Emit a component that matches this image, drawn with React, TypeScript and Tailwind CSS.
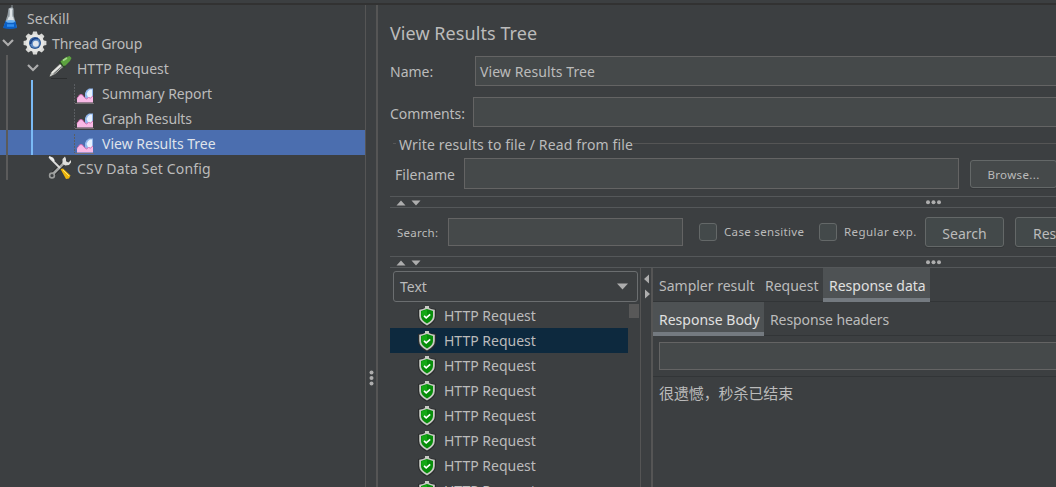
import type { ReactNode } from 'react';

const Flask = () => (
  <svg width="18" height="25" viewBox="0 0 18 25">
    <path d="M7.500 3.500 11 2l1.500 1.500V10L16 22.500H2.500L6.500 10z" fill="#9aa3a9" />
    <path d="M8.500 3.500h3V10l2 7H5.500l3-7z" fill="#dde3e7" />
    <path d="M8 5v7M12 5v7" stroke="#7d8a93" strokeWidth=".7" />
    <path d="M11 0v3" stroke="#8e979c" strokeWidth="1" />
    <path d="M4.500 16h10l1.500 7q-7 2-14 0z" fill="#0b5fc4" />
    <ellipse cx="9.500" cy="16.400" rx="4.500" ry="1.300" fill="#6db2f0" />
    <path d="M6 20.500h7" stroke="#2f8df0" strokeWidth="2.500" />
  </svg>
);

const Gear = () => (
  <svg width="24" height="24" viewBox="-12 -12 24 24">
    {[0, 45, 90, 135].map((a) => (
      <path key={a} d="M-2.800-8-1.900-11.400h3.800L2.800-8V8L1.900 11.400h-3.800L-2.800 8z" fill="#d8d8d6" transform={`rotate(${a})`} />
    ))}
    <circle r="9" fill="#e6e6e4" />
    <circle r="6" fill="#2c5794" />
    <circle r="4.800" fill="#5f8bc4" />
    <circle cx=".8" cy=".8" r="3" fill="#dfe5ec" />
    <path d="M-4.400 1Q-4-5 3-4.400" stroke="#183f83" strokeWidth="1.600" fill="none" />
  </svg>
);

const Pipette = () => (
  <svg width="24" height="25" viewBox="0 0 24 25">
    <path d="M3 23.500h16" stroke="#2c2e2f" strokeWidth="1" />
    <path d="M1 21.500 3 17 12 8.500l3.500 3.500-8.500 7.500-5 2.500z" fill="#c6c7c3" stroke="#333636" strokeWidth=".8" />
    <path d="m4 18 9-8" stroke="#f0f0ec" strokeWidth="1.200" />
    <path d="m5.500 19 8.500-7.500" stroke="#555a5a" strokeWidth=".9" />
    <path d="m11.500 6.500 5.500 6" stroke="#2d4629" strokeWidth="2.200" />
    <path d="m12.500 6.500 5-4 4-1.500 2 2-1.500 3-4.500 4.500-2 .5z" fill="#5ca33f" />
    <path d="m15 5.500 4-2.500" stroke="#a7d98c" strokeWidth="1.600" />
  </svg>
);

const Chart = () => (
  <svg width="20" height="22" viewBox="0 0 20 22">
    <path d="M.5 1v19" stroke="#5b5e62" strokeWidth="1" strokeDasharray="2 1" />
    <path d="M1 20.500h19" stroke="#777174" strokeWidth="1" />
    <path d="M11 18v-8q1-3.500 4-4.500h4V18z" fill="#8fb6ec" />
    <path d="M12.500 11q1-3.500 3.500-4.500h2v8l-3 2z" fill="#e6f1ff" />
    <path d="M3 19.500V15.500q.5-1.500 1.500-2 .5-2 2.500-2t2.500 2q1 .3 1.500 1.500l1.500 1 2-1.500 2 .5 2.500-2v6.500z" fill="#f8b9e6" />
    <path d="M3 15.500q.5-1.500 1.500-2 .5-2 2.500-2t2.500 2q1 .3 1.500 1.500l1.500 1 2-1.500 2 .5 2.500-2" stroke="#cf66ad" strokeWidth=".9" fill="none" />
  </svg>
);

const Tools = () => (
  <svg width="24" height="25" viewBox="0 0 24 25">
    <path d="M4 20 18 6" stroke="#242626" strokeWidth="4.500" />
    <path d="M4 20 18 6" stroke="#a4a6a5" strokeWidth="2.600" />
    <path d="M17 1.500 14.500 4v4.500l2.500 2 4-.5 2-2.500V5l-2.500 2.500L18 6.500V4z" fill="#dfdfdc" />
    <circle cx="4" cy="20.500" r="2.400" fill="#3c3f41" stroke="#9a9c9b" strokeWidth="1.600" />
    <path d="m2 3 10 10" stroke="#dcdcda" strokeWidth="1.800" />
    <path d="m1 2 3.500 1.500L6 6" stroke="#eee" strokeWidth="2" fill="none" />
    <path d="m12.500 14 2.500-.5 7.500 7-1.500 3-3 .5z" fill="#eeb60d" />
    <path d="m15 15 6 6" stroke="#ffe274" strokeWidth="1" />
  </svg>
);

const Shield = () => (
  <svg width="20" height="22" viewBox="0 0 20 22" className="shrink-0">
    <path d="M10 .5 12.500 3 19 4v7q0 6.500-9 10.800Q1 17.500 1 11V4l6.500-1z" fill="#2a2c2d" />
    <path d="M8 1h4v2l2 1 3.800.8V11q0 5.500-7.800 9.500Q2.200 16.500 2.200 11V4.800L6 4l2-1z" fill="#c9cbc5" />
    <path d="M10 4 16 6v5q0 4-6 7.500Q4 15 4 11V6z" fill="#078d0a" />
    <path d="M10 4.500V11H4.500V6.500z" fill="#14a815" />
    <path d="m7 10.800 2.200 2 4-3.500" stroke="#fff" strokeWidth="1.700" fill="none" />
  </svg>
);

const Chevron = () => (
  <svg width="12" height="8" viewBox="0 0 12 8">
    <path d="m1 1 5 5 5-5" stroke="#adadad" strokeWidth="2.200" fill="none" />
  </svg>
);

const reports = [
  { name: 'Summary Report', tracking: 'tracking-[-0.1px]' },
  { name: 'Graph Results', tracking: 'tracking-[-0.15px]' },
  { name: 'View Results Tree', tracking: '' },
];

function SplitBar() {
  return (
    <div className="flex h-3 shrink-0 items-center border-y border-[#55585a]">
      <svg width="26" height="6" viewBox="0 0 26 6" className="ml-[6px] mt-px">
        <path d="M0.5 5.5h9L5 .5zM15.5.5h9L20 5.5z" fill="#adadad" />
      </svg>
      <svg width="18" height="6" viewBox="0 0 18 6" className="ml-[503px]">
        <circle cx="3" cy="3.300" r="2" fill="#adadad" />
        <circle cx="8.500" cy="3.300" r="2" fill="#adadad" />
        <circle cx="14" cy="3.300" r="2" fill="#adadad" />
      </svg>
    </div>
  );
}

function Field({ className, children }: { className: string; children?: ReactNode }) {
  return (
    <div className={`flex shrink-0 items-center border border-[#646464] bg-[#45494a] ${className}`}>{children}</div>
  );
}

function Tree() {
  return (
    <div className="relative w-[365px] shrink-0">
      <div className="flex h-[25px] items-center">
        <div className="ml-px w-[26px]"><Flask /></div>
        <span className="pt-[2px] tracking-[0.1px]">SecKill</span>
      </div>
      <div className="flex h-[25px] items-center">
        <div className="ml-[2px] mr-[9px]"><Chevron /></div>
        <Gear />
        <span className="ml-[5px] pt-[2px] tracking-[-0.1px]">Thread Group</span>
      </div>
      <div className="flex h-[25px] items-center">
        <div className="ml-[27px] mr-[9px]"><Chevron /></div>
        <Pipette />
        <span className="ml-[5px] pt-[2px]">HTTP Request</span>
      </div>
      {reports.map((r) => (
        <div
          key={r.name}
          className={`flex h-[25px] items-center pl-[74px] ${r.name === 'View Results Tree' ? 'bg-[#4b6eaf] text-[#dfe3ea]' : ''}`}
        >
          <div className="w-7 pt-[2px]"><Chart /></div>
          <span className={`pt-[2px] ${r.tracking}`}>{r.name}</span>
        </div>
      ))}
      <div className="flex h-[25px] items-center pl-12">
        <Tools />
        <span className="ml-[5px] pt-[2px] tracking-[0.18px]">CSV Data Set Config</span>
      </div>
      <div className="absolute left-[6px] top-[50px] h-[125px] w-[2px] bg-[#5b5b5b]" />
      <div className="absolute left-[31px] top-[75px] h-[75px] w-[2px] bg-[#7abaf5]" />
    </div>
  );
}

function Results() {
  return (
    <div className="w-[250px] shrink-0 pt-[3px]">
      <div className="ml-[3px] flex h-[31px] w-[245px] items-center justify-between rounded-[3px] border border-[#6b6e70] pl-[6px] pr-[8px]">
        <span>Text</span>
        <svg width="13" height="8" viewBox="0 0 13 8"><path d="M1 .5h11l-5.500 6z" fill="#adadad" /></svg>
      </div>
      <div className="flex justify-between pt-px">
        <div className="w-[238px]">
          {[0, 1, 2, 3, 4, 5, 6, 7].map((n) => (
            <div key={n} className={`flex h-[25px] items-center pl-[27px] ${n === 1 ? 'bg-[#0d293e]' : ''}`}>
              <Shield />
              <span className="ml-[7px] pt-px">HTTP Request</span>
            </div>
          ))}
        </div>
        <div className="mr-px mt-px h-[14px] w-[10px] bg-[#585858]" />
      </div>
    </div>
  );
}

function Response() {
  return (
    <div className="min-w-0 flex-1">
      <div className="flex h-[34px] border-b border-[#323537]">
        <span className="w-[106px] pl-[6px] pt-[8px]">Sampler result</span>
        <span className="w-[64px] pl-[6px] pt-[8px]">Request</span>
        <span className="h-[34px] w-[107px] border-b-4 border-[#747a80] bg-[#4e5254] pl-[6px] pt-[8px] text-[#e0e0e0]">Response data</span>
      </div>
      <div className="flex h-[34px] border-b border-[#323537]">
        <span className="h-[34px] w-[111px] border-b-4 border-[#747a80] bg-[#4e5254] pl-[6px] pt-[8px] text-[#e0e0e0]">Response Body</span>
        <span className="pl-[6px] pt-[8px] tracking-[-0.1px]">Response headers</span>
      </div>
      <div className="flex h-[41px] border-b border-[#323537] pl-[6px] pt-[6px]">
        <Field className="h-7 w-[420px]" />
      </div>
      <div className="pl-[6px] pt-[6px] font-['Noto_Sans_CJK_SC',sans-serif] text-[15px] leading-[20px] tracking-[-0.1px]">很遗憾，秒杀已结束</div>
    </div>
  );
}

export default function App() {
  return (
    <div className="flex h-[487px] w-[1056px] flex-col overflow-hidden whitespace-nowrap bg-[#3c3f41] font-['Noto_Sans',sans-serif] text-[14px] leading-[20px] text-[#bbbbbb]">
      <div className="h-[5px] shrink-0 border-b-2 border-[#323232]" />
      <div className="flex min-h-0 flex-1">
        <Tree />
        <div className="flex w-[13px] shrink-0 items-center justify-center border-l border-r-2 border-l-[#555] border-r-[#555]">
          <svg width="6" height="16" viewBox="0 0 6 16" className="mt-[263px]">
            <circle cx="3.500" cy="2.500" r="2" fill="#adadad" />
            <circle cx="3.500" cy="8" r="2" fill="#adadad" />
            <circle cx="3.500" cy="13.500" r="2" fill="#adadad" />
          </svg>
        </div>
        <div className="flex min-w-0 flex-1 flex-col pl-3">
          <div className="h-[51px] shrink-0 pt-[16px] text-[18px] leading-6 tracking-[0.06px]">View Results Tree</div>
          <div className="flex h-[30px] shrink-0 items-center">
            <span className="w-[85px] shrink-0 pt-px">Name:</span>
            <Field className="h-[30px] w-[600px] pl-1"><span className="pt-px tracking-[0.08px]">View Results Tree</span></Field>
          </div>
          <div className="mt-[11px] flex h-[30px] shrink-0 items-center">
            <span className="w-[83px] shrink-0 pt-1 tracking-[-0.08px]">Comments:</span>
            <Field className="h-[30px] w-[600px]" />
          </div>
          <div className="flex h-[31px] shrink-0 items-center pl-[3px] pt-px">
            <div className="h-px w-[3px] bg-[#555]" />
            <span className="ml-[3px] pt-[3px] tracking-[0.15px]">Write results to file / Read from file</span>
            <div className="h-px flex-1 bg-[#555]" />
          </div>
          <div className="flex h-[38px] shrink-0 items-start">
            <span className="w-[74px] shrink-0 pl-[5px] pt-[7px]">Filename</span>
            <Field className="h-[31px] w-[495px]" />
            <div className="ml-[11px] mt-[2px] flex h-[28px] w-[87px] shrink-0 items-center justify-center rounded-[3px] border border-[#646868] bg-[#45494a] pt-px text-[11.500px] tracking-[0.35px] shadow-[0_1px_0_#35383a]">Browse...</div>
          </div>
          <SplitBar />
          <div className="flex h-12 shrink-0 items-center text-[11.500px]">
            <span className="w-[58px] shrink-0 pl-[7px] pt-px tracking-[0.25px]">Search:</span>
            <Field className="h-[28px] w-[235px]" />
            <div className="-mt-px ml-4 size-[18px] shrink-0 rounded-[3px] border border-[#646868] bg-[#43494a]" />
            <span className="ml-[7px] w-[95px] shrink-0 tracking-[0.33px]">Case sensitive</span>
            <div className="-mt-px size-[18px] shrink-0 rounded-[3px] border border-[#646868] bg-[#43494a]" />
            <span className="ml-[7px] w-[81px] shrink-0 tracking-[0.45px]">Regular exp.</span>
            <div className="flex h-[30px] w-[79px] shrink-0 items-center justify-center rounded-[3px] border border-[#646868] bg-[#43494a] pt-[3px] text-[14px] shadow-[0_1px_0_#35383a]">Search</div>
            <div className="ml-[11px] flex h-[30px] w-[79px] shrink-0 items-center rounded-[3px] border border-[#646868] bg-[#43494a] pl-[17px] pt-[3px] text-[14px] shadow-[0_1px_0_#35383a]">Reset</div>
          </div>
          <SplitBar />
          <div className="flex min-h-0 flex-1 overflow-hidden">
            <Results />
            <div className="w-[13px] shrink-0 border-l border-r-2 border-l-[#555] border-r-[#555]">
              <svg width="10" height="26" viewBox="0 0 10 26" className="ml-[2px] mt-[6px]">
                <path d="M6 .5v9L1 5zM2 15.500v9l5-4.500z" fill="#adadad" />
              </svg>
            </div>
            <Response />
          </div>
        </div>
      </div>
    </div>
  );
}
